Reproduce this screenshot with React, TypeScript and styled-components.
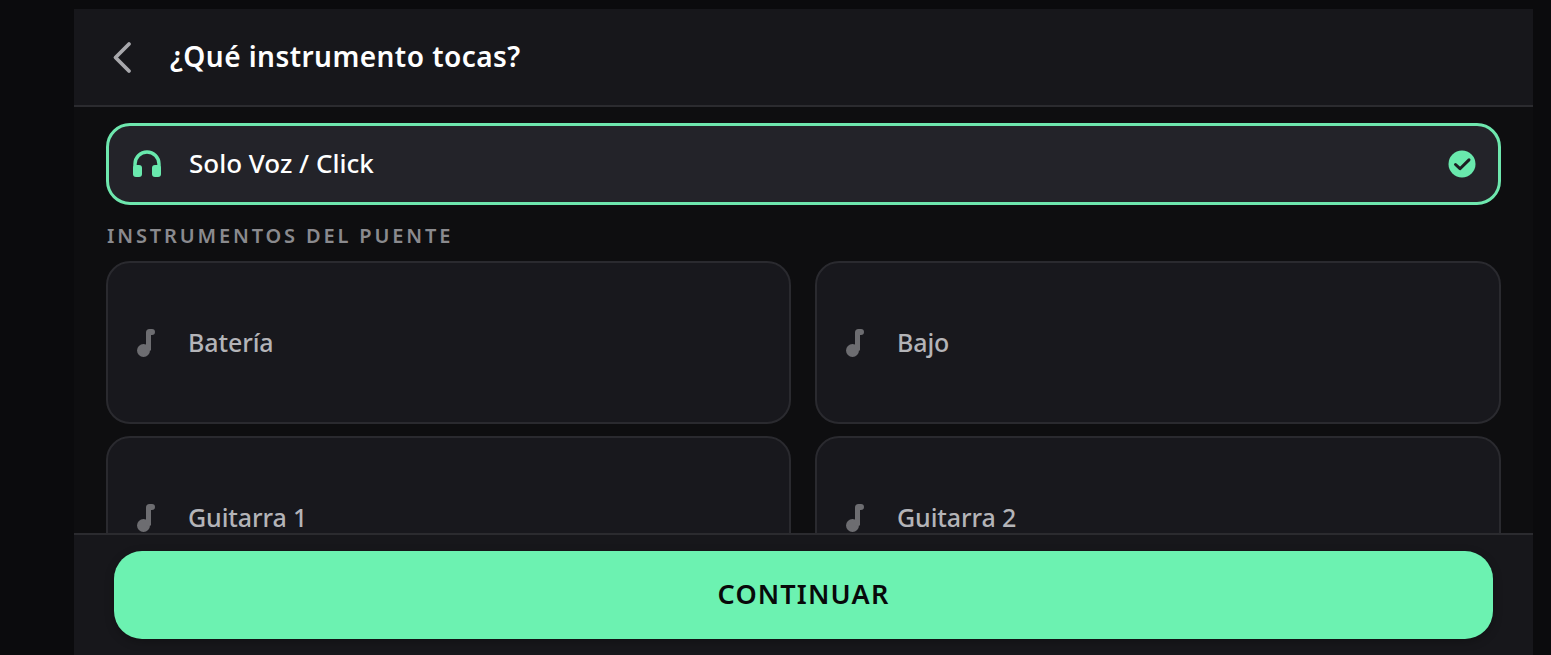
import React from 'react';
import styled, { createGlobalStyle } from 'styled-components';

const GlobalStyle = createGlobalStyle`
  html, body {
    margin: 0;
    height: 100%;
    background: #0b0b0d;
    overflow: hidden;
  }
  * { box-sizing: border-box; }
`;

const Page = styled.div`
  height: 655px;
  padding: 9px 18px 0 74px;
  font-family: "Noto Sans", sans-serif;
  background: #0b0b0d;
`;

const Screen = styled.div`
  height: 646px;
  display: flex;
  flex-direction: column;
  background: #0e0e10;
`;

const Header = styled.header`
  height: 98px;
  flex: none;
  display: flex;
  align-items: center;
  gap: 33px;
  padding: 0 0 0 33px;
  background: #17171b;
  border-bottom: 2px solid #2b2b2f;
`;

const BackButton = styled.button`
  width: 30px;
  height: 40px;
  padding: 0;
  display: flex;
  align-items: center;
  justify-content: center;
  background: none;
  border: 0;
  color: #a8a8ac;
`;

const Title = styled.h1`
  margin: -2px 0 0;
  font-size: 28px;
  font-weight: 600;
  letter-spacing: 0.45px;
  color: #fff;
`;

const Content = styled.main`
  flex: 1;
  min-height: 0;
  overflow: hidden;
  padding: 16px 32px 0;
`;

const Voice = styled.div`
  height: 82px;
  display: flex;
  align-items: center;
  gap: 26px;
  padding: 0 22px;
  background: #232329;
  border: 3px solid #6ee7ae;
  border-radius: 24px;
`;

const VoiceName = styled.span`
  flex: 1;
  margin-top: -2px;
  font-size: 26px;
  font-weight: 500;
  color: #fff;
`;

const SectionLabel = styled.h2`
  margin: 19px 0 13px 1px;
  font-size: 20px;
  line-height: 24px;
  font-weight: 600;
  letter-spacing: 2.85px;
  color: #8a8a8e;
`;

const Grid = styled.div`
  display: grid;
  grid-template-columns: 685fr 686fr;
  column-gap: 24px;
  row-gap: 12px;
`;

const Card = styled.div`
  height: 163px;
  display: flex;
  align-items: center;
  gap: 33px;
  padding: 0 29px;
  background: #18181d;
  border: 2px solid #2a2a2f;
  border-radius: 24px;
`;

const CardName = styled.span`
  flex: 1;
  margin-top: -1px;
  font-size: 25px;
  line-height: 30px;
  font-weight: 500;
  letter-spacing: -0.1px;
  color: #b4b4b8;
`;

const Footer = styled.footer`
  height: 122px;
  flex: none;
  padding: 16px 40px 0;
  background: #17171b;
  border-top: 2px solid #2b2b2f;
`;

const Continue = styled.button`
  width: 100%;
  height: 88px;
  padding: 0 0 4px;
  border: 0;
  border-radius: 28px;
  background: #6cf2b1;
  box-shadow: 0 3px 10px rgba(0, 0, 0, 0.25);
  font-family: inherit;
  font-size: 27px;
  font-weight: 600;
  letter-spacing: 1.15px;
  color: #08090a;
`;

const Headphones = () => (
  <svg width="32" height="32" viewBox="0 0 32 32" fill="#69e9ad">
    <path d="M4 24v-8a12 12 0 0 1 24 0v8" fill="none" stroke="#69e9ad" strokeWidth="3.400" />
    <rect x="2" y="17" width="9" height="12" rx="3" />
    <rect x="21" y="17" width="9" height="12" rx="3" />
  </svg>
);

const Check = () => (
  <svg width="28" height="28" viewBox="0 0 28 28">
    <circle cx="14" cy="14" r="13.500" fill="#69e9ad" />
    <path d="M7.500 14.500l4.500 4.200 9-8.800" fill="none" stroke="#1d1d22" strokeWidth="3" strokeLinecap="round" strokeLinejoin="round" />
  </svg>
);

const Note = () => (
  <svg width="18" height="28" viewBox="0 0 18 28" fill="#6d6d71">
    <circle cx="6.500" cy="21.500" r="6.500" />
    <path d="M9 21.500V3.500A3.500 3.500 0 0 1 12.500 0h2.500a3 3 0 0 1 0 6h-1v15.500z" />
  </svg>
);

const instruments = ['Batería', 'Bajo', 'Guitarra 1', 'Guitarra 2'];

export default function App() {
  return (
    <Page>
      <GlobalStyle />
      <Screen>
        <Header>
          <BackButton aria-label="Volver">
            <svg width="20" height="33" viewBox="0 0 20 33" fill="none">
              <path d="M17 3L3.500 16.500 17 30" stroke="currentColor" strokeWidth="3.800" strokeLinecap="round" strokeLinejoin="round" />
            </svg>
          </BackButton>
          <Title>¿Qué instrumento tocas?</Title>
        </Header>
        <Content>
          <Voice>
            <Headphones />
            <VoiceName>Solo Voz / Click</VoiceName>
            <Check />
          </Voice>
          <SectionLabel>INSTRUMENTOS DEL PUENTE</SectionLabel>
          <Grid>
            {instruments.map((name) => (
              <Card key={name}>
                <Note />
                <CardName>{name}</CardName>
              </Card>
            ))}
          </Grid>
        </Content>
        <Footer>
          <Continue>CONTINUAR</Continue>
        </Footer>
      </Screen>
    </Page>
  );
}
